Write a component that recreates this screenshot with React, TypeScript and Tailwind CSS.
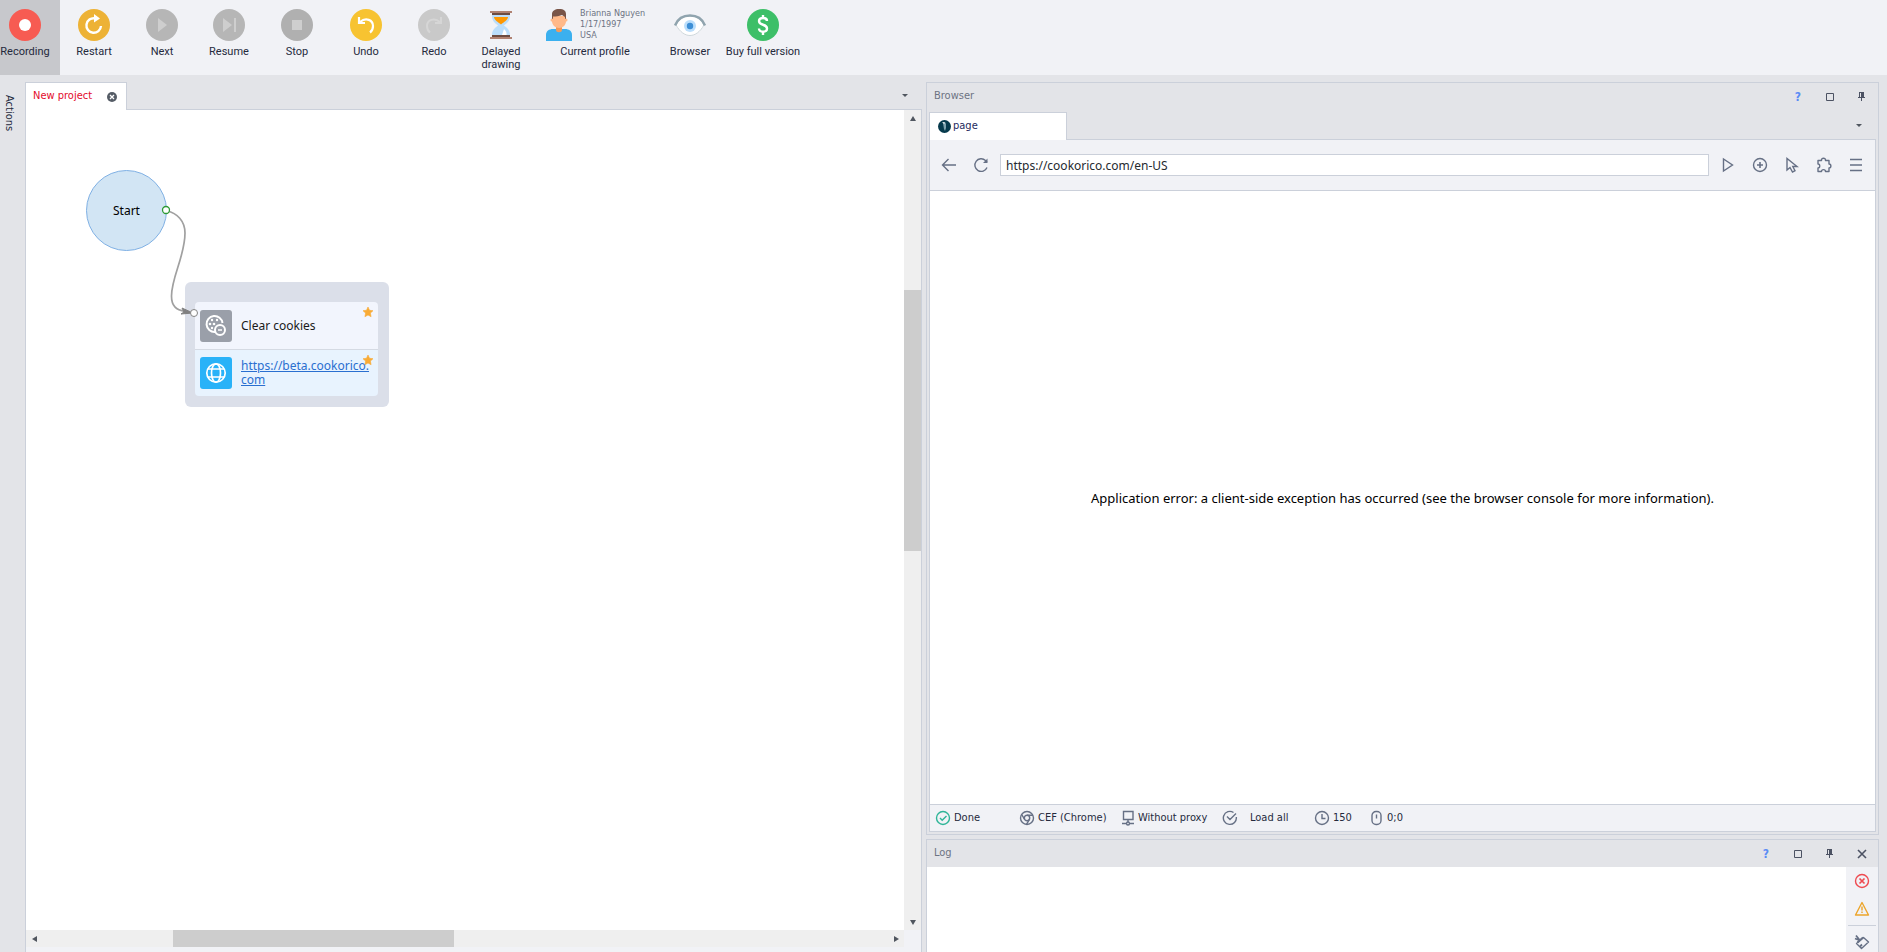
import type { ReactNode } from "react";

interface IconProps {
  className?: string;
}

interface ToolButtonProps {
  label: string;
  icon: ReactNode;
  className?: string;
}

const ToolButton = ({ label, icon, className = "w-[68px]" }: ToolButtonProps) => (
  <button
    type="button"
    className={`flex h-full shrink-0 flex-col items-center pt-[9px] text-[#252a3d] ${className}`}
  >
    {icon}
    <span className="mt-1 text-center text-[11px] leading-[13px]">{label}</span>
  </button>
);

const Disc = ({ color, children }: { color: string; children: ReactNode }) => (
  <svg viewBox="0 0 32 32" className="h-8 w-8 shrink-0">
    <circle cx="16" cy="16" r="16" fill={color} />
    {children}
  </svg>
);

const HourglassIcon = () => (
  <svg viewBox="0 0 32 32" className="h-8 w-8 shrink-0">
    <path d="M7 4h18v3c0 5-3 7-6 9.500 3 2.500 6 4.500 6 9.500v2H7v-2c0-5 3-7 6-9.500C10 14 7 12 7 7z" fill="#bbdefb" />
    <path d="M9 8h14c0 3-4 5-7 7.500C13 13 9 11 9 8z" fill="#ff9800" />
    <path d="M19 20c2 2 3 4 2.500 6H17z" fill="#fff" />
    <path d="M5 2h22v2H5zM5 28h22v2H5z" fill="#b08272" />
    <path d="M7 4h18v2H7zM7 26h18v2H7z" fill="#6d4c41" />
  </svg>
);

const PersonIcon = () => (
  <svg viewBox="0 0 26 32" className="h-8 w-[26px] shrink-0">
    <path d="M0 32v-6c0-4 3-6 7-6h12c4 0 7 2 7 6v6z" fill="#3bb0ef" />
    <path d="M10 15h6v6c0 3-6 3-6 0z" fill="#f29a5c" />
    <path d="M6 7h14v5c0 4-3 7-7 7s-7-3-7-7z" fill="#ffb98a" />
    <circle cx="6" cy="11" r="1.500" fill="#ffb98a" />
    <circle cx="20" cy="11" r="1.500" fill="#ffb98a" />
    <path d="M6 10V5c0-3 3-5 7-5 5 0 7 2 7 5v5l-1-.5V8l-3-2c-3 1.500-6 1.500-9 1.500v2z" fill="#795548" />
  </svg>
);

const EyeIcon = () => (
  <svg viewBox="0 0 32 32" className="h-8 w-8 shrink-0">
    <path d="M2 16C6 9 11 7 16 7s10 2 14 9c-4 7-9 10.500-14 10.500S6 23 2 16z" fill="#fff" stroke="#cfd8dc" />
    <path d="M1 16.500C4 9 10 6.500 16 6.500s12 2.500 15 10" fill="none" stroke="#90a4ae" strokeWidth="2.500" />
    <circle cx="16" cy="17" r="6" fill="#bbdefb" />
    <circle cx="16" cy="17" r="3.200" fill="#3d8fd6" />
  </svg>
);

const LineIcon = ({ className = "", children }: IconProps & { children: ReactNode }) => (
  <svg
    viewBox="0 0 16 16"
    fill="none"
    stroke="currentColor"
    strokeWidth="1.400"
    className={`h-4 w-4 shrink-0 ${className}`}
  >
    {children}
  </svg>
);

const PinIcon = () => (
  <svg viewBox="0 0 8 10" className="h-2.5 w-2">
    <path d="M1 0h5v5H1zM0 5h7v1H0zM3 6h1v3H3z" fill="#4c5263" />
    <path d="M2 1h1v4H2z" fill="#e3e4e8" />
  </svg>
);

const SquareIcon = () => (
  <svg viewBox="0 0 8 8" className="h-2 w-2">
    <path d="M.5.5h7v7h-7z" fill="none" stroke="#4c5263" />
  </svg>
);

const CaretIcon = ({ className = "" }: IconProps) => (
  <svg viewBox="0 0 8 8" className={`h-2 w-2 ${className}`}>
    <path d="M1 2h6L4 7z" fill="#50565f" />
  </svg>
);

const SmallCaret = () => (
  <svg viewBox="0 0 6 4" className="h-1 w-1.5">
    <path d="M0 0h6L3 3z" fill="#50565f" />
  </svg>
);

interface PanelHeaderProps {
  title: string;
  closable?: boolean;
}

const PanelHeader = ({ title, closable = false }: PanelHeaderProps) => (
  <header className="flex h-[27px] shrink-0 items-center pl-[7px] text-[11px] text-[#6d7383]">
    <h2 className="flex-1">{title}</h2>
    <button type="button" aria-label={`${title} help`} className="w-8 text-xs font-bold text-[#5b8cf5]">?</button>
    <button type="button" aria-label={`Maximize ${title}`} className="flex w-8 justify-center"><SquareIcon /></button>
    <button type="button" aria-label={`Pin ${title}`} className="flex w-8 justify-center"><PinIcon /></button>
    {closable && (
      <button type="button" aria-label={`Close ${title}`} className="flex w-8 justify-center">
        <svg viewBox="0 0 10 10" className="h-2.5 w-2.5">
          <path d="M1 1l8 8M9 1l-8 8" stroke="#4c5263" strokeWidth="1.600" />
        </svg>
      </button>
    )}
  </header>
);

const Star = () => (
  <svg viewBox="0 0 12 12" className="absolute top-1 right-1 h-3 w-3">
    <path d="M6 1l1.500 3.300 3.500.4-2.600 2.400.7 3.600L6 9l-3.100 1.700.7-3.600L1 4.700l3.500-.4z" fill="#f9ab35" stroke="#f9ab35" strokeWidth=".6" />
  </svg>
);

const FlowCanvas = () => (
  <div className="relative min-w-0 flex-1 overflow-hidden bg-white text-xs text-[#1a1a1a] [font-family:'Noto_Sans',sans-serif]">
    <div className="absolute top-[60px] left-[60px] flex h-[81px] w-[81px] items-center justify-center rounded-full border border-[#7fb0e4] bg-[#d2e5f4] text-black">
      Start
    </div>
    <div className="absolute top-[172px] left-[159px] w-[204px] rounded-md bg-[#dbdfe9] pt-5 pr-[11px] pb-[11px] pl-2.5">
      <div className="overflow-hidden rounded">
        <div className="relative flex h-[47px] items-center gap-[9px] bg-[#f2f5fd] pl-[5px]">
          <svg viewBox="0 0 32 32" className="h-8 w-8 shrink-0">
            <rect width="32" height="32" rx="3" fill="#9a9fa9" />
            <g fill="none" stroke="#fff" strokeWidth="2">
              <path d="M15 22A8 8 0 1 1 22.500 13" />
              <circle cx="20" cy="20" r="5" />
              <path d="M18 20h4" strokeWidth="1.500" />
            </g>
            <g fill="#fff">
              <circle cx="12" cy="10" r="1.200" />
              <circle cx="17" cy="10" r="1.200" />
              <circle cx="10" cy="14" r="1.300" />
              <circle cx="14" cy="14" r="1.300" />
              <circle cx="12" cy="18" r="1.200" />
            </g>
          </svg>
          <span>Clear cookies</span>
          <Star />
        </div>
        <div className="relative flex h-[47px] items-center gap-[9px] border-t border-[#d5dae3] bg-[#e8f3fe] pl-[5px]">
          <svg viewBox="0 0 32 32" className="h-8 w-8 shrink-0">
            <rect width="32" height="32" rx="3" fill="#29b2f8" />
            <g fill="none" stroke="#fff" strokeWidth="1.700">
              <circle cx="16" cy="16" r="9.200" />
              <ellipse cx="16" cy="16" rx="4.500" ry="9.200" />
              <path d="M8 12h16M8 20h16" />
            </g>
          </svg>
          <a href="https://beta.cookorico.com" className="leading-[14px] whitespace-nowrap text-[#2a6fd0] underline">
            https://beta.cookorico.
            <br />
            com
          </a>
          <Star />
        </div>
      </div>
    </div>
    <svg viewBox="0 0 200 220" className="pointer-events-none absolute top-0 left-0 h-[220px] w-[200px]">
      <path d="M141 101C151 103 159 111 159 123C159 146 145.500 167 145.500 186C145.500 196 150 200 159 201.500" fill="none" stroke="#a0a0a0" strokeWidth="1.700" />
      <path d="M156 198l11 5-12 1 3-2z" fill="#808080" stroke="#808080" />
      <circle cx="140" cy="100" r="3.500" fill="#fff" stroke="#2e9a35" strokeWidth="1.300" />
      <circle cx="168" cy="203" r="3.500" fill="#fff" stroke="#858585" />
    </svg>
  </div>
);

const EditorPanel = () => (
  <main className="flex w-[897px] min-w-0 shrink flex-col pt-[7px]">
    <div className="flex h-7 shrink-0 items-stretch">
      <div className="flex w-[102px] items-center justify-between border-x border-t border-[#cbd0da] bg-white pr-[9px] pl-[7px] text-[11px] text-[#e30b2c]">
        New project
        <button type="button" aria-label="Close New project">
          <svg viewBox="0 0 10 10" className="h-2.5 w-2.5">
            <circle cx="5" cy="5" r="5" fill="#555c66" />
            <path d="M3 3l4 4M7 3l-4 4" stroke="#fff" strokeWidth="1.300" />
          </svg>
        </button>
      </div>
      <div className="flex flex-1 items-center justify-end border-b border-[#cbd0da] pr-3.5">
        <button type="button" aria-label="Open projects" className="flex h-4 items-center"><SmallCaret /></button>
      </div>
    </div>
    <div className="flex min-h-0 flex-1 flex-col border-x border-[#cbd0da] bg-[#f1f2f6]">
      <div className="flex min-h-0 flex-1">
        <FlowCanvas />
        <div className="flex w-[17px] shrink-0 flex-col bg-[#efefef]">
          <button type="button" aria-label="Scroll up" className="flex h-[17px] shrink-0 items-center justify-center">
            <CaretIcon className="rotate-180" />
          </button>
          <div className="flex-[163]" />
          <div className="flex-[261] bg-[#cdcdcd]" />
          <div className="flex-[362]" />
          <button type="button" aria-label="Scroll down" className="flex h-[17px] shrink-0 items-center justify-center">
            <CaretIcon />
          </button>
        </div>
      </div>
      <div className="mr-[17px] mb-[5px] flex h-[17px] shrink-0 bg-[#efefef]">
        <button type="button" aria-label="Scroll left" className="flex w-[17px] shrink-0 items-center justify-center">
          <CaretIcon className="rotate-90" />
        </button>
        <div className="flex-[130]" />
        <div className="flex-[281] bg-[#cdcdcd]" />
        <div className="flex-[433]" />
        <button type="button" aria-label="Scroll right" className="flex w-[17px] shrink-0 items-center justify-center">
          <CaretIcon className="-rotate-90" />
        </button>
      </div>
    </div>
  </main>
);

const NavButton = ({ label, children }: { label: string; children: ReactNode }) => (
  <button type="button" aria-label={label} className="flex h-8 w-8 shrink-0 items-center justify-center">
    <LineIcon>{children}</LineIcon>
  </button>
);

const BrowserPanel = () => (
  <section className="flex min-h-0 flex-1 flex-col border border-[#cbd0da]">
    <PanelHeader title="Browser" />
    <div className="mx-[2px] mt-[2px] flex h-7 shrink-0">
      <div className="flex w-[138px] items-center gap-[2px] border-x border-t border-[#cbd0da] bg-white pl-2 text-[11px] text-[#252a5d]">
        <svg viewBox="0 0 13 13" className="h-[13px] w-[13px]">
          <circle cx="6.500" cy="6.500" r="6.500" fill="#063a4c" />
          <path d="M5 3l2-1 1 2v4l-1 3-1-2z" fill="#7fa3ae" />
          <path d="M4 2.500l2.500-.5v2z" fill="#fff" />
        </svg>
        page
      </div>
      <div className="flex flex-1 items-center justify-end border-b border-[#cbd0da] pr-3.5">
        <button type="button" aria-label="Open pages" className="flex h-4 items-center"><SmallCaret /></button>
      </div>
    </div>
    <div className="mx-[2px] mb-[2px] flex min-h-0 flex-1 flex-col border-x border-b border-[#cbd0da] bg-white">
      <div className="flex h-[51px] shrink-0 items-center border-b border-[#cbd0da] bg-[#f1f2f6] px-[3px] text-[#667085]">
        <NavButton label="Back"><path d="M15 8H2M7.500 2L1.500 8l6 6" /></NavButton>
        <NavButton label="Reload">
          <path d="M14 10.500A6.300 6.300 0 1 1 12.500 3.500l1.500 1.500" />
          <path d="M14.500 1.500V6H10z" fill="currentColor" stroke="none" />
        </NavButton>
        <input
          aria-label="Address"
          defaultValue="https://cookorico.com/en-US"
          className="ml-[3px] h-[22px] min-w-0 flex-1 border border-[#cbd0da] bg-white px-[5px] text-xs text-[#252a30] outline-none [font-family:'Noto_Sans',sans-serif]"
        />
        <div className="ml-[3px] flex">
          <NavButton label="Go"><path d="M3.500 2v12l9-6z" /></NavButton>
          <NavButton label="Add"><circle cx="8" cy="8" r="6.500" /><path d="M5 8h6M8 5v6" strokeWidth="1.600" /></NavButton>
          <NavButton label="Select element"><path d="M3 1.500v11.500l3-2.500 2.500 4.500 2.500-1.300L8.800 9.500H13z" /></NavButton>
          <NavButton label="Extensions">
            <path d="M2 3.500h3.500c-.5-3 4.500-3 4 0H13V7c2.500 0 2.500 4 0 4v3.500H9.500c0-2.500-4-2.500-4 0H2V11c2.300 0 2.300-4 0-4z" strokeLinejoin="round" />
          </NavButton>
          <NavButton label="Menu"><path d="M2 2.500h12M2 8h12M2 13.500h12" /></NavButton>
        </div>
      </div>
      <div className="flex min-h-0 flex-1 items-center justify-center pt-[2px] text-[13px] text-black [font-family:'Noto_Sans',sans-serif]">
        <p>Application error: a client-side exception has occurred (see the browser console for more information).</p>
      </div>
      <footer className="flex h-[27px] shrink-0 items-center border-t border-[#cbd0da] bg-[#f1f2f6] pl-[5px] text-[11px] whitespace-nowrap text-[#252a3d]">
        <span className="flex w-[84px] items-center gap-[3px]">
          <LineIcon className="text-[#2fb598]"><circle cx="8" cy="8" r="6.500" /><path d="M5 8l2.200 2.300L11.500 6" /></LineIcon>
          Done
        </span>
        <span className="flex w-[101px] items-center gap-[3px]">
          <LineIcon className="text-[#667085]">
            <circle cx="8" cy="8" r="6.500" />
            <circle cx="8" cy="8" r="2.700" />
            <path d="M8 5.300h6M5.600 9.300L2.700 4.500M10.400 9.300L7.500 14.300" />
          </LineIcon>
          CEF (Chrome)
        </span>
        <span className="flex w-[102px] items-center gap-[2px]">
          <LineIcon className="text-[#667085]">
            <path d="M3.500 1.500h9.500v8H3.500zM2 13.500h4M10 13.500h4M8 9.500V12" />
            <circle cx="8" cy="13.500" r="1.500" />
          </LineIcon>
          Without proxy
        </span>
        <span className="flex w-[92px] items-center gap-3">
          <LineIcon className="text-[#667085]"><path d="M14.300 7A6.500 6.500 0 1 1 11.500 2.500M5 6.500L8 9.500l6-6" /></LineIcon>
          Load all
        </span>
        <span className="flex w-[54px] items-center gap-[3px]">
          <LineIcon className="text-[#667085]"><circle cx="8" cy="8" r="6.500" /><path d="M8 4v4.500h3.500" /></LineIcon>
          150
        </span>
        <span className="flex items-center gap-[3px]">
          <LineIcon className="text-[#667085]"><rect x="4" y="1.500" width="9" height="13" rx="4" /><path d="M8.500 4.500v4" /></LineIcon>
          0;0
        </span>
      </footer>
    </div>
  </section>
);

const LogPanel = () => (
  <section className="flex h-[113px] shrink-0 flex-col border-x border-t border-[#cbd0da]">
    <PanelHeader title="Log" closable />
    <div className="flex min-h-0 flex-1">
      <div className="flex-1 bg-white" />
      <div className="flex w-8 flex-col items-center overflow-hidden bg-[#f1f2f6]">
        <button type="button" aria-label="Errors" className="flex h-7 shrink-0 items-center text-[#ee4b51]">
          <LineIcon><circle cx="8" cy="8" r="6.500" /><path d="M5.500 5.500l5 5M10.500 5.500l-5 5" strokeWidth="1.700" /></LineIcon>
        </button>
        <button type="button" aria-label="Warnings" className="flex h-7 shrink-0 items-center text-[#eca52b]">
          <LineIcon><path d="M8 1.500L14.500 14h-13z" strokeLinejoin="round" /><path d="M8 5.500v4M8 10.500v1.500" /></LineIcon>
        </button>
        <div className="mt-[2px] h-px w-7 shrink-0 bg-[#cbd0da]" />
        <button type="button" aria-label="Clear log" className="flex h-8 shrink-0 items-center text-[#667085]">
          <LineIcon>
            <path d="M9.500 3.500l5 4.500-7 6.500-5-5z" strokeLinejoin="round" />
            <path d="M6 6.500L2 1.500M6 6.500L1 4.500M6 12.500l2-2" strokeWidth="1.800" />
            <path d="M3.500 8.500L9 3.500" strokeWidth="2" />
          </LineIcon>
        </button>
      </div>
    </div>
  </section>
);

const Toolbar = () => (
  <nav className="flex h-[75px] shrink-0 bg-[#f1f2f6] [font-family:Roboto,sans-serif]">
    <ToolButton
      label="Recording"
      className="w-[60px] bg-[#c7c8cc] pr-2.5"
      icon={<Disc color="#f75b52"><circle cx="16" cy="16" r="6" fill="#fff" /></Disc>}
    />
    <ToolButton
      label="Restart"
      icon={
        <Disc color="#edb236">
          <path d="M23 17a7.300 7.300 0 1 1-6-7.700" fill="none" stroke="#fff" strokeWidth="2.400" />
          <path d="M16 5l6 4.500-6 4z" fill="#fff" />
        </Disc>
      }
    />
    <ToolButton label="Next" icon={<Disc color="#b6b6b6"><path d="M12 9l9 7-9 7z" fill="#cecece" /></Disc>} />
    <ToolButton
      label="Resume"
      className="w-[66px]"
      icon={<Disc color="#b6b6b6"><path d="M10 9l9 7-9 7zM21 9h2v14h-2z" fill="#cecece" /></Disc>}
    />
    <ToolButton
      label="Stop"
      className="w-[70px]"
      icon={<Disc color="#b0b0b0"><path d="M11 11h10v10H11z" fill="#cecece" /></Disc>}
    />
    <ToolButton
      label="Undo"
      icon={
        <Disc color="#f7c331">
          <path d="M10 13c6-5 13-2 13 4 0 3-1 5-3 6.500M9 8v6h6" fill="none" stroke="#fff" strokeWidth="2.200" />
        </Disc>
      }
    />
    <ToolButton
      label="Redo"
      icon={
        <Disc color="#c9c9c9">
          <path d="M22 13c-6-5-13-2-13 4 0 3 1 5 3 6.500M23 8v6h-6" fill="none" stroke="#d6d6d6" strokeWidth="2" />
        </Disc>
      }
    />
    <ToolButton label="Delayed drawing" className="w-[66px] px-2" icon={<HourglassIcon />} />
    <ToolButton
      label="Current profile"
      className="w-[122px]"
      icon={
        <span className="flex h-8 w-[98px] gap-2 text-left">
          <PersonIcon />
          <span className="-mt-px text-[9px] leading-[11px] whitespace-nowrap text-[#6d7383] [font-family:'DejaVu_Sans_Condensed','DejaVu_Sans',sans-serif]">
            Brianna Nguyen
            <br />
            1/17/1997
            <br />
            USA
          </span>
        </span>
      }
    />
    <ToolButton label="Browser" icon={<EyeIcon />} />
    <ToolButton
      label="Buy full version"
      className="w-[78px]"
      icon={
        <Disc color="#3dbf68">
          <path d="M20 12c0-2-1.500-3-4-3s-4 1-4 3c0 5 8 2.500 8 7.500 0 2-1.500 3.200-4 3.200s-4-1.200-4-3.200M16 6v3M16 23v3" fill="none" stroke="#fff" strokeWidth="2.400" />
        </Disc>
      }
    />
  </nav>
);

export default function App() {
  return (
    <div className="flex h-screen flex-col overflow-hidden bg-[#e3e4e8] [font-family:'DejaVu_Sans_Condensed','DejaVu_Sans',sans-serif]">
      <Toolbar />
      <div className="flex min-h-0 flex-1">
        <aside className="w-[25px] shrink-0 pt-5 pl-px">
          <button type="button" className="text-[11px] leading-4 text-[#252a3d] [writing-mode:vertical-rl]">
            Actions
          </button>
        </aside>
        <EditorPanel />
        <div className="ml-1 flex min-w-0 flex-1 flex-col gap-1 pt-[7px] pr-2">
          <BrowserPanel />
          <LogPanel />
        </div>
      </div>
    </div>
  );
}
